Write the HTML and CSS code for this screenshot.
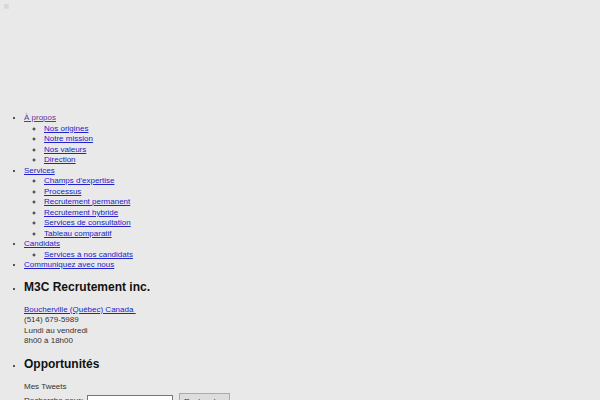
FILE: index.html
```html
<!DOCTYPE html>
<html lang="fr">
<head>
<meta charset="utf-8">
<title>M3C Recrutement inc.</title>
<link rel="stylesheet" href="styles.css">
</head>
<body>
<header class="site-header">
  <span class="broken-img" aria-hidden="true"></span>
</header>
<ul class="menu">
  <li><a class="visited" href="#">À propos</a>
    <ul class="sub">
      <li><a href="#">Nos origines</a></li>
      <li><a href="#">Notre mission</a></li>
      <li><a href="#">Nos valeurs</a></li>
      <li><a href="#">Direction</a></li>
    </ul>
  </li>
  <li><a href="#">Services</a>
    <ul class="sub">
      <li><a href="#">Champs d'expertise</a></li>
      <li><a href="#">Processus</a></li>
      <li><a href="#">Recrutement permanent</a></li>
      <li><a href="#">Recrutement hybride</a></li>
      <li><a href="#">Services de consultation</a></li>
      <li><a href="#">Tableau comparatif</a></li>
    </ul>
  </li>
  <li><a href="#">Candidats</a>
    <ul class="sub">
      <li><a href="#">Services à nos candidats</a></li>
    </ul>
  </li>
  <li><a href="#">Communiquez avec nous</a></li>
</ul>
<ul class="widgets">
  <li class="widget">
    <h2 class="widget-title">M3C Recrutement inc.</h2>
    <div class="contact">
      <a href="#">Boucherville (Québec) Canada&nbsp;</a><br>
      (514) 679-5989<br>
      Lundi au vendredi<br>
      8h00 à 18h00
    </div>
  </li>
  <li class="widget">
    <h2 class="widget-title">Opportunités</h2>
    <div class="contact">Mes Tweets</div>
  </li>
  <li class="widget search">
    <form class="search-form">
      <label>Recherche pour:</label>
      <input type="text" class="search-input">
      <button type="button" class="search-btn">Rechercher</button>
    </form>
  </li>
</ul>
</body>
</html>
```
FILE: styles.css
```css
html, body {
  background: #e9e9e9;
}
body {
  margin: 4px;
  font-family: "Liberation Sans", Arial, sans-serif;
  font-size: 8px;
  line-height: 10.5px;
  color: #222;
}
a {
  color: #2222cc;
  text-decoration: underline;
}
a.visited {
  color: #663399;
}
.site-header {
  height: 109px;
  position: relative;
}
.broken-img {
  position: absolute;
  left: -1px;
  top: -1px;
  width: 4px;
  height: 4px;
  background: #d8d8d8;
  border: 1px solid #dcdcdc;
}
.menu, .widgets {
  margin: 0;
  padding-left: 20px;
}
.sub {
  margin: 0;
  padding-left: 20px;
  list-style: circle;
}
.widgets {
  margin-top: 9px;
}
.widget {
  margin-bottom: 10px;
}
.widget-title {
  font-size: 12px;
  line-height: 15px;
  font-weight: bold;
  color: #111;
  margin: 0 0 10px 0;
}
.contact {
  color: #333;
}
.search {
  list-style: none;
  margin-top: -9px;
}
.search-form {
  display: flex;
  align-items: center;
  gap: 3px;
  color: #333;
}
.search-input {
  width: 82px;
  height: 10px;
  border: 1px solid #777;
  padding: 1px;
  background: #fff;
  margin: 2px 0 0 1px;
}
.search-btn {
  font-family: "Liberation Sans", Arial, sans-serif;
  font-size: 8px;
  width: 51px;
  height: 16px;
  padding: 0 3px;
  margin-left: 3px;
  border: 1px solid #aaa;
  background: #ddd;
  color: #333;
}
```
